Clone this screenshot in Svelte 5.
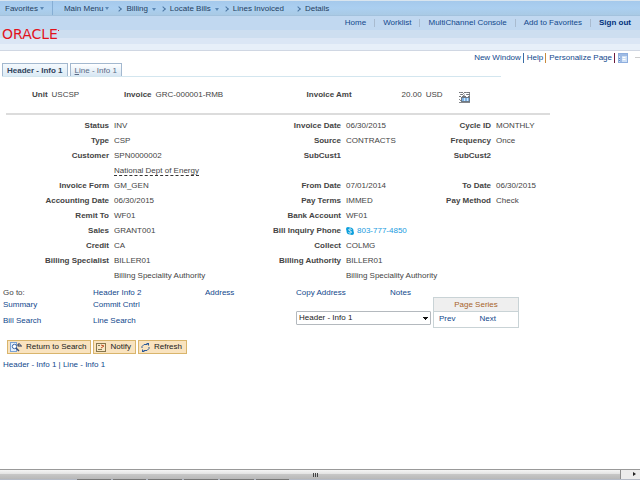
<script lang="ts">
	type Field = { label?: string; value?: string; kind?: string };

	const crumbs = [
		{ text: 'Billing', menu: true },
		{ text: 'Locate Bills', menu: true },
		{ text: 'Lines Invoiced', menu: false, wide: true },
		{ text: 'Details', menu: false }
	];

	const userLinks = ['Home', 'Worklist', 'MultiChannel Console', 'Add to Favorites'];

	// three label/value pairs per row
	const rows: Field[][] = [
		[{ label: 'Status', value: 'INV' }, { label: 'Invoice Date', value: '06/30/2015' }, { label: 'Cycle ID', value: 'MONTHLY' }],
		[{ label: 'Type', value: 'CSP' }, { label: 'Source', value: 'CONTRACTS' }, { label: 'Frequency', value: 'Once' }],
		[{ label: 'Customer', value: 'SPN0000002' }, { label: 'SubCust1' }, { label: 'SubCust2' }],
		[{ value: 'National Dept of Energy', kind: 'hint' }, {}, {}],
		[{ label: 'Invoice Form', value: 'GM_GEN' }, { label: 'From Date', value: '07/01/2014' }, { label: 'To Date', value: '06/30/2015' }],
		[{ label: 'Accounting Date', value: '06/30/2015' }, { label: 'Pay Terms', value: 'IMMED' }, { label: 'Pay Method', value: 'Check' }],
		[{ label: 'Remit To', value: 'WF01' }, { label: 'Bank Account', value: 'WF01' }, {}],
		[{ label: 'Sales', value: 'GRANT001' }, { label: 'Bill Inquiry Phone', value: '803-777-4850', kind: 'phone' }, {}],
		[{ label: 'Credit', value: 'CA' }, { label: 'Collect', value: 'COLMG' }, {}],
		[{ label: 'Billing Specialist', value: 'BILLER01' }, { label: 'Billing Authority', value: 'BILLER01' }, {}],
		[{ value: 'Billing Speciality Authority' }, { value: 'Billing Speciality Authority' }, {}]
	];

	let page = $state('Header - Info 1');
</script>

<div class="page">
	<header>
		<nav class="crumbs">
			<button class="fav">Favorites<i class="caret"></i></button>
			<button class="main">Main Menu<i class="caret"></i></button>
			{#each crumbs as c}
				<span class="crumb" class:wide={c.wide}>
					<i class="sep"></i><a href="#top">{c.text}</a>{#if c.menu}<i class="caret"></i>{/if}
				</span>
			{/each}
		</nav>
		<div class="banner">
			<div class="logo">ORACLE<sup></sup></div>
			<nav class="user">
				{#each userLinks as text}
					<a href="#top">{text}</a>
				{/each}
				<a class="out" href="#top">Sign out</a>
			</nav>
		</div>
	</header>

	<div class="tools">
		<a href="#top">New Window</a>
		<a href="#top">Help</a>
		<a class="b2" href="#top">Personalize Page</a>
		<a class="b3" href="#top" aria-label="Page link">
			<svg width="10" height="10" viewBox="0 0 10 10">
				<rect x="0.5" y="0.5" width="9" height="9" fill="#cfe0f5" stroke="#8eaede" />
				<path d="M1 2h8M3 3v6" stroke="#6c95d3" fill="none" />
				<path d="M4.500 4.500h3M4.500 6.500h3" stroke="#fff" />
				<path d="M1 5.500h1M1 7.500h1" stroke="#5c84c4" />
			</svg>
		</a>
		<i class="dash"></i>
	</div>

	<div class="tabs">
		<button class="tab active">Header - Info 1</button>
		<button class="tab"><u>L</u>ine - Info 1</button>
	</div>

	<div class="summary">
		<div class="pair unit"><b>Unit</b><span>USCSP</span></div>
		<div class="pair invoice"><b>Invoice</b><span>GRC-000001-RMB</span></div>
		<div class="pair amount"><b>Invoice Amt</b><span class="num">20.00</span><span>USD</span></div>
		<button class="calc" aria-label="Invoice totals">
			<svg width="12" height="12" viewBox="0 0 12 12">
				<path d="M0 1.500h4M5 1.500h2M8 1.500h3M1 3.500h3M5 4h1M7 3.500h4M0 5.500h2M3 5.500h4M9 5.500h2" stroke="#77797c" fill="none" />
				<path d="M1.500 1v4M4.500 2v3M7.500 1v4M10.500 2v3" stroke="#8d9094" stroke-dasharray="1 1" />
				<rect x="2.500" y="6.500" width="8" height="4" fill="#7fb4e6" stroke="#6c7885" />
				<path d="M5.500 7v3M8.500 7v3" stroke="#cfe6fb" />
				<path d="M0 8.500h1M1 9.500h1M0 11.500h11" stroke="#85888c" />
			</svg>
		</button>
	</div>

	<dl class="fields">
		{#each rows as row}
			{#each row as f}
				<dt>{f.label ?? ''}</dt>
				<dd>
					{#if f.kind === 'hint'}
						<span class="hint">{f.value}</span>
					{:else if f.kind === 'phone'}
						<a class="phone" href="tel:8037774850">
							<svg width="8" height="8" viewBox="0 0 16 16">
								<circle cx="8" cy="8" r="7" fill="#0c9fdc" />
								<circle cx="4" cy="4" r="4" fill="#0c9fdc" />
								<circle cx="12" cy="12" r="4" fill="#0c9fdc" />
								<path d="M11 5C9 3 5 4 5.500 6S11 8 11 10 7 13 5 11" fill="none" stroke="#fff" stroke-width="2" />
							</svg>{f.value}</a>
					{:else}
						{f.value ?? ''}
					{/if}
				</dd>
			{/each}
		{/each}
	</dl>

	<section class="goto">
		<div class="links">
			<span>Go to:</span>
			<a href="#top">Header Info 2</a>
			<a href="#top">Address</a>
			<a href="#top">Summary</a>
			<a class="span" href="#top">Commit Cntrl</a>
			<a class="last" href="#top">Bill Search</a>
			<a class="last" href="#top">Line Search</a>
		</div>
		<div class="jump">
			<div class="more">
				<a href="#top">Copy Address</a>
				<a href="#top">Notes</a>
			</div>
			<select bind:value={page} aria-label="Go to page">
				<option>Header - Info 1</option>
				<option>Line - Info 1</option>
			</select>
		</div>
		<div class="series">
			<h2>Page Series</h2>
			<div class="steps">
				<a href="#top">Prev</a>
				<a href="#top">Next</a>
			</div>
		</div>
	</section>

	<div class="actions">
		<button>
			<svg width="12" height="10" viewBox="0 0 12 10">
				<rect x="0.5" y="0.5" width="6" height="9" fill="#e4effb" stroke="#7ba2d4" />
				<circle cx="4.500" cy="4.500" r="2.200" fill="#fff" stroke="#3c68a8" />
				<path d="M6 6l3 3" stroke="#3c4e78" stroke-width="1.500" />
				<path d="M11 5V3H8M9.500 1L7.500 3l2 2" fill="none" stroke="#22335c" />
			</svg>
			Return to Search
		</button>
		<button>
			<svg width="10" height="9" viewBox="0 0 10 9">
				<rect x="0.5" y="0.5" width="9" height="8" fill="#f7e6c4" stroke="#86764e" />
				<path d="M2 2.500h2M2 6.500h4" stroke="#7f7a58" />
				<path d="M5 2l3 1-3 2" fill="none" stroke="#c4542c" />
			</svg>
			Notify
		</button>
		<button>
			<svg width="9" height="9" viewBox="0 0 9 9">
				<path d="M1 5V3.500L3 1.500H6M8 4v1.500L6 7.500H3" fill="none" stroke="#2c5a98" />
				<path d="M5 0h3v3zM4 9H1V6z" fill="#2c5a98" />
			</svg>
			Refresh
		</button>
	</div>

	<div class="bottom">
		<a href="#top">Header - Info 1</a> | <a href="#top">Line - Info 1</a>
	</div>

	<footer>
		<div class="scroll">
			<div class="thumb"><i></i><i></i><i></i></div>
			<button class="right" aria-label="Scroll right"></button>
		</div>
		<div class="taskbar">
			{#each Array(6) as _}<i></i>{/each}
		</div>
	</footer>
</div>

<style>
	:global(body) {
		margin: 0;
		background: #fff;
	}

	.page {
		display: flex;
		flex-direction: column;
		min-height: 100vh;
		font: 8px/12px 'Liberation Sans', Arial, sans-serif;
		color: #444;
	}

	a {
		color: #11488c;
		text-decoration: none;
		white-space: nowrap;
	}

	button {
		font: inherit;
		color: inherit;
		padding: 0;
		border: 0;
		background: none;
		white-space: nowrap;
	}

	svg {
		display: block;
		flex: none;
	}

	/* header */
	header {
		border-bottom: 1px solid #d0d7e3;
	}

	.crumbs {
		display: flex;
		align-items: center;
		height: 14px;
		border-top: 1px solid #d9e5ef;
		border-bottom: 1px solid #a3c2dd;
		background: linear-gradient(#a5c9ec, #abcff0 50%, #a9cae5);
		color: #24405f;
	}

	.crumbs a {
		color: inherit;
	}

	.caret {
		display: inline-block;
		margin-left: 2px;
		vertical-align: 1px;
		border: 2px solid transparent;
		border-top: 3px solid #5c88b5;
		border-bottom: 0;
	}

	.crumb .caret {
		margin-left: 4px;
	}

	.fav,
	.main {
		height: 14px;
		padding: 2px 8px 0 5px;
		line-height: 12px;
	}

	.fav {
		border-right: 1px solid #86aed4;
	}

	.main {
		margin-left: 6px;
	}

	.crumb {
		display: flex;
		align-items: center;
		padding-top: 2px;
	}

	.crumb + .crumb {
		margin-left: 5px;
	}

	.crumb.wide {
		padding-right: 7px;
	}

	.sep {
		width: 3px;
		height: 3px;
		margin-right: 5px;
		border: solid #4c76a2;
		border-width: 1px 1px 0 0;
		transform: rotate(45deg);
	}

	.banner {
		display: flex;
		justify-content: space-between;
		align-items: flex-start;
		height: 34px;
		background: linear-gradient(#c1d8f0 0 14px, #cddef0 14px 22px, #dbe6f5 22px 28px, #e7eff9 28px);
	}

	.logo {
		margin: 9px 0 0 2px;
		font: 14px/18px 'DejaVu Sans', sans-serif;
		color: #e2121c;
	}

	.logo sup {
		display: inline-block;
		width: 1px;
		height: 1px;
		vertical-align: 8px;
		background: #e2121c;
	}

	.user {
		display: flex;
		margin: 1px 9px 0 0;
	}

	.user a + a {
		margin-left: 8px;
		padding-left: 9px;
		background: linear-gradient(#a9bbcf, #a9bbcf) 0 2px / 1px 8px no-repeat;
	}

	.user .out {
		font-weight: bold;
		color: #00307c;
	}

	/* window links */
	.tools {
		display: flex;
		justify-content: flex-end;
		align-items: center;
		height: 11px;
		padding-top: 1px;
	}

	.tools a + a {
		margin-left: 2px;
		padding-left: 3px;
		border-left: 1px solid #3a6ca5;
		line-height: 10px;
	}

	.tools a.b2 {
		border-color: #c98a3c;
	}

	.tools a.b3 {
		border-color: #6b1a3c;
	}

	.dash {
		width: 5px;
		height: 1px;
		margin-left: 7px;
		background: #ccc;
	}

	/* tabs */
	.tabs {
		display: flex;
		gap: 2px;
		width: 78%;
		margin-left: 2px;
		border-bottom: 1px solid #d3e6ef;
	}

	.tab {
		height: 13px;
		padding: 0 4px;
		border: 1px solid #a3b8cf;
		border-bottom: 0;
		background: linear-gradient(#fff, #d7e6f3);
		line-height: 13px;
		color: #5a6b86;
	}

	.tab.active {
		background: linear-gradient(#f4f9fd, #dcebf5);
		font-weight: bold;
		color: #31435c;
	}

	/* invoice summary */
	.summary {
		display: flex;
		align-items: center;
		width: 85%;
		height: 36px;
		margin-left: 6px;
		border-bottom: 2px solid #dcdcdc;
	}

	.pair {
		display: flex;
		gap: 4px;
	}

	.unit {
		padding-left: 26px;
		flex: 0 0 92px;
	}

	.invoice {
		flex: 1 1 183px;
	}

	.amount {
		flex: 1 1 152px;
	}

	.num {
		width: 66px;
		text-align: right;
	}

	.calc {
		flex: 1 1 92px;
		padding: 4px 0 0 1px;
	}

	/* details */
	.fields {
		display: grid;
		grid-template-columns: 109px 151fr 71px 95fr 45px 144fr;
		grid-auto-rows: 15px;
		column-gap: 5px;
		margin: 3px 0 4px;
		line-height: 15px;
		white-space: nowrap;
	}

	dt {
		font-weight: bold;
		text-align: right;
	}

	dd {
		margin: 0;
	}

	.hint {
		display: inline-block;
		line-height: 9px;
		border-bottom: 1px dashed #333;
	}

	.phone {
		display: flex;
		align-items: center;
		gap: 3px;
		color: #1a9be0;
	}

	/* go to */
	.goto {
		display: flex;
		align-items: flex-start;
	}

	.links {
		display: grid;
		grid-template-columns: 90px 112px 1fr;
		flex: 0 1 293px;
		padding-left: 3px;
	}

	.links .span {
		grid-column: span 2;
	}

	.links .last {
		padding-top: 4px;
	}

	.jump {
		flex: 0 0 135px;
	}

	.more {
		display: flex;
		justify-content: space-between;
		padding-right: 20px;
	}

	select {
		appearance: none;
		display: block;
		width: 100%;
		height: 14px;
		margin-top: 12px;
		padding: 0 2px;
		border: 1px solid #b4b9be;
		border-radius: 1px;
		font: inherit;
		color: #222;
		background:
			conic-gradient(from -45deg at 50% 100%, #111 90deg, transparent 0) calc(100% - 2px) 5px / 5px 3px no-repeat,
			#fff;
	}

	.series {
		width: 84px;
		margin: 10px 0 0 2px;
		border: 1px solid #c9d3d6;
	}

	h2 {
		margin: 0;
		border-bottom: 1px solid #c9d3d6;
		background: #efefef;
		font: inherit;
		line-height: 13px;
		color: #a8642a;
		text-align: center;
	}

	.steps {
		display: flex;
		gap: 24px;
		padding: 0 5px 2px;
		line-height: 13px;
	}

	/* buttons */
	.actions {
		display: flex;
		gap: 2px;
		margin: 12px 0 0 7px;
	}

	.actions button {
		display: flex;
		align-items: center;
		gap: 4px;
		height: 14px;
		padding: 0 4px 0 2px;
		border: 1px solid #d9b56c;
		background: #f9e3bf;
		color: #222;
	}

	.bottom {
		margin: 5px 0 0 3px;
		color: #11488c;
	}

	/* scroll bar and the sliver of desktop under it */
	footer {
		margin-top: auto;
	}

	.scroll {
		display: flex;
		height: 9px;
		border-top: 1px solid #999;
	}

	.thumb {
		display: flex;
		flex: 1;
		justify-content: center;
		align-items: center;
		gap: 1px;
		padding-left: 10px;
		border-right: 1px solid #8d8d8d;
		background: linear-gradient(#f5f5f5, #e2e2e2 45%, #c6c6c6 50%, #b8b8b8);
	}

	.thumb i {
		width: 1px;
		height: 4px;
		background: #444;
	}

	.right {
		position: relative;
		width: 19px;
		background: #ececec;
	}

	.right::after {
		content: '';
		position: absolute;
		top: 2px;
		left: 12px;
		border: 2px solid transparent;
		border-left: 3px solid #222;
		border-right: 0;
	}

	.taskbar {
		display: flex;
		gap: 2px;
		height: 1px;
		padding-left: 12%;
		background: #b4bac6;
	}

	.taskbar i {
		width: 6%;
		background: #777;
	}
</style>
